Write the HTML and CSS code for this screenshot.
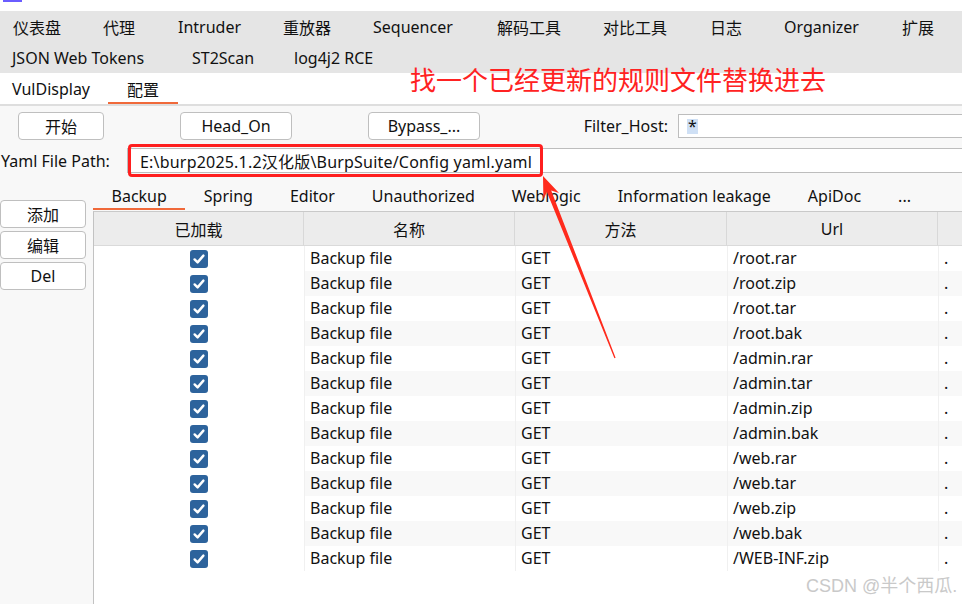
FILE: index.html
```html
<!DOCTYPE html>
<html lang="zh-CN">
<head>
<meta charset="utf-8">
<title>配置</title>
<link rel="stylesheet" href="styles.css">
</head>
<body>
<div class="page">
  <div class="titlebar"><span class="tb-mark"></span></div>

  <nav class="menubar">
    <div class="menurow r1">
      <span>仪表盘</span><span>代理</span><span>Intruder</span><span>重放器</span><span>Sequencer</span><span>解码工具</span><span>对比工具</span><span>日志</span><span>Organizer</span><span>扩展</span>
    </div>
    <div class="menurow r2">
      <span>JSON Web Tokens</span><span>ST2Scan</span><span>log4j2 RCE</span>
    </div>
  </nav>

  <div class="subtabs">
    <span class="subtab first">VulDisplay</span>
    <span class="subtab active">配置</span>
  </div>

  <main class="content">
    <div class="row-buttons">
      <button class="btn b-start">开始</button>
      <button class="btn b-head">Head_On</button>
      <button class="btn b-bypass">Bypass_...</button>
      <label class="fh-label">Filter_Host:</label>
      <div class="field fh-field"><span class="sel">*</span></div>
    </div>

    <div class="row-yaml">
      <label class="yaml-label">Yaml File Path:</label>
      <div class="field yaml-field">E:\burp2025.1.2汉化版\BurpSuite/Config yaml.yaml</div>
    </div>

    <div class="main">
      <aside class="side">
        <button class="btn sbtn">添加</button>
        <button class="btn sbtn">编辑</button>
        <button class="btn sbtn">Del</button>
      </aside>
      <section class="rules">
        <div class="ruletabs">
          <span class="rtab active">Backup</span>
          <span class="rtab">Spring</span>
          <span class="rtab">Editor</span>
          <span class="rtab">Unauthorized</span>
          <span class="rtab">Weblogic</span>
          <span class="rtab">Information leakage</span>
          <span class="rtab">ApiDoc</span>
          <span class="rtab">...</span>
        </div>
        <div class="tablewrap">
          <table class="grid">
            <colgroup>
              <col class="c1"><col class="c2"><col class="c3"><col class="c4"><col class="c5">
            </colgroup>
            <thead>
              <tr><th>已加载</th><th>名称</th><th>方法</th><th>Url</th><th></th></tr>
            </thead>
            <tbody id="rows"></tbody>
          </table>
        </div>
      </section>
    </div>
  </main>

  <div class="note">找一个已经更新的规则文件替换进去</div>
  <div class="hl-box"></div>
  <svg class="arrow" width="962" height="604" viewBox="0 0 962 604">
    <polygon points="543,176 559,193 551.2,190.4 615.6,357.8 614.4,358.2 546.8,191.8 543.4,200" fill="#ff2a1c"/>
  </svg>
  <div class="watermark">CSDN @半个西瓜.</div>
</div>
<script src="script.js"></script>
</body>
</html>
```

FILE: script.js
```js
const urls = ["/root.rar","/root.zip","/root.tar","/root.bak","/admin.rar","/admin.tar","/admin.zip","/admin.bak","/web.rar","/web.tar","/web.zip","/web.bak","/WEB-INF.zip"];
const check = '<span class="cb"><svg viewBox="0 0 18 18" width="18" height="18"><path d="M4.6 9.4 L7.6 12.4 L13.4 5.6" fill="none" stroke="#fff" stroke-width="2.4" stroke-linecap="round" stroke-linejoin="round"/></svg></span>';
document.getElementById("rows").innerHTML = urls.map(u =>
  `<tr><td class="chk">${check}</td><td>Backup file</td><td>GET</td><td>${u}</td><td>.</td></tr>`
).join("");
```

FILE: styles.css
```css
* { box-sizing: border-box; }

html, body {
  margin: 0;
  padding: 0;
  background: #ffffff;
}

body {
  font-family: "Noto Sans", "Noto Sans CJK SC", sans-serif;
  font-size: 16px;
  color: #111111;
}

.page {
  position: relative;
  width: 962px;
  height: 604px;
  overflow: hidden;
  display: flex;
  flex-direction: column;
}

/* top strip */
.titlebar {
  height: 11px;
  background: #ffffff;
  flex: none;
}
.tb-mark {
  display: block;
  width: 19px;
  height: 2px;
  margin-left: 3px;
  background: #6a5cff;
}

/* main menu */
.menubar {
  background: #e5e5e5;
  flex: none;
}
.menurow {
  display: grid;
  height: 31px;
  align-items: center;
  white-space: nowrap;
}
.menurow.r1 {
  padding-left: 13px;
  grid-template-columns: 90px 75px 105px 90px 124px 106px 107px 74px 118px auto;
}
.menurow.r2 {
  padding-left: 12px;
  grid-template-columns: 180px 102px auto;
}

/* sub tabs */
.subtabs {
  display: flex;
  height: 33px;
  background: #ffffff;
  border-bottom: 2px solid #dedede;
  flex: none;
}
.subtab {
  display: flex;
  align-items: center;
  height: 31px;
  padding: 0 19px;
}
.subtab.first {
  padding-left: 12px;
  padding-right: 18px;
}
.subtab.active {
  box-shadow: inset 0 -2px 0 #f0693a;
}

/* content */
.content {
  flex: 1;
  background: #f8f8f8;
  display: flex;
  flex-direction: column;
  min-height: 0;
}

.btn {
  font: inherit;
  color: #111111;
  background: #ffffff;
  border: 1px solid #bfbfbf;
  border-radius: 4px;
  padding: 0;
  height: 28px;
  flex: none;
}

.row-buttons {
  display: flex;
  align-items: center;
  height: 28px;
  margin-top: 6px;
  flex: none;
}
.b-start { margin-left: 18px; width: 86px; }
.b-head { margin-left: 76px; width: 112px; }
.b-bypass { margin-left: 76px; width: 112px; }
.fh-label {
  width: 198px;
  flex: none;
  text-align: right;
  padding-right: 10px;
}
.field {
  background: #ffffff;
  border: 1px solid #bdbdbd;
  display: flex;
  align-items: center;
  white-space: nowrap;
}
.fh-field {
  width: 290px;
  height: 24px;
  padding-left: 8px;
  flex: none;
}
.sel {
  background: #cfe0f5;
  padding: 0 1px;
  line-height: 15px;
}

.row-yaml {
  display: flex;
  align-items: center;
  height: 25px;
  margin-top: 8px;
  flex: none;
}
.yaml-label {
  width: 127px;
  padding-left: 1px;
  white-space: nowrap;
  flex: none;
}
.yaml-field {
  flex: 1;
  height: 25px;
  padding-left: 12px;
  margin-right: -4px;
  letter-spacing: 0.2px;
}

.main {
  flex: 1;
  display: flex;
  margin-top: 8px;
  min-height: 0;
}
.side {
  width: 93px;
  flex: none;
  padding-top: 19px;
  display: flex;
  flex-direction: column;
  gap: 3px;
}
.sbtn {
  width: 86px;
  height: 28px;
}

.rules {
  flex: 1;
  display: flex;
  flex-direction: column;
  min-width: 0;
}
.ruletabs {
  display: flex;
  height: 30px;
  flex: none;
  white-space: nowrap;
}
.rtab {
  display: flex;
  align-items: center;
  height: 29px;
  padding: 0 18.5px;
  flex: none;
}
.rtab.active {
  box-shadow: inset 0 -2px 0 #f0693a;
}

.tablewrap {
  flex: 1;
  background: #ffffff;
  border-top: 1px solid #c9c9c9;
  border-left: 1px solid #c2c2c2;
  overflow: hidden;
}

.grid {
  border-collapse: separate;
  border-spacing: 0;
  table-layout: fixed;
  width: 904px;
}
.c1 { width: 210px; }
.c2 { width: 211px; }
.c3 { width: 212px; }
.c4 { width: 211px; }
.c5 { width: 60px; }

.grid th {
  height: 34px;
  background: #ececec;
  font-weight: normal;
  text-align: center;
  border-right: 1px solid #d8d8d8;
  border-bottom: 1px solid #dadada;
  padding: 0;
}
.grid td {
  height: 25px;
  padding: 0 0 0 5px;
  border-left: 1px solid #f0f0f0;
  white-space: nowrap;
  overflow: hidden;
  line-height: 25px;
}
.grid td.chk {
  border-left: none;
  text-align: center;
  padding: 0;
  background: #ffffff;
}
.grid tbody tr:nth-child(even) td {
  background: #f8f8f8;
}
.grid tbody tr:nth-child(even) td.chk {
  background: #ffffff;
}
.cb {
  display: inline-block;
  width: 18px;
  height: 18px;
  border-radius: 3px;
  background: #2d639c;
  vertical-align: middle;
  position: relative;
  top: -1px;
}
.cb svg { display: block; }

/* annotation overlays */
.note {
  position: absolute;
  left: 410px;
  top: 64px;
  font-family: "Noto Sans CJK SC", sans-serif;
  font-size: 26px;
  line-height: 30px;
  color: #ff2222;
  white-space: nowrap;
}
.hl-box {
  position: absolute;
  left: 128px;
  top: 144px;
  width: 415px;
  height: 33px;
  border: 3px solid #ff1f1f;
  border-radius: 4px;
}
.arrow {
  position: absolute;
  left: 0;
  top: 0;
  pointer-events: none;
}
.watermark {
  position: absolute;
  left: 806px;
  top: 574px;
  font-family: "Liberation Sans", "Noto Sans CJK SC", sans-serif;
  font-size: 18px;
  line-height: 24px;
  color: #c9c9c9;
  white-space: nowrap;
}
```
